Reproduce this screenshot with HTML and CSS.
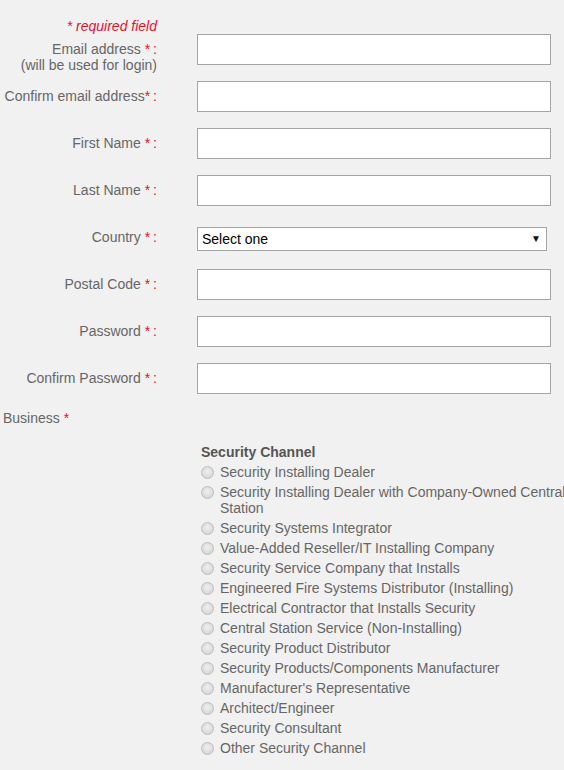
FILE: index.html
```html
<!DOCTYPE html>
<html lang="en">
  <head>
    <meta charset="UTF-8" />
    <meta name="viewport" content="width=device-width, initial-scale=1.0" />
    <title>Register</title>
    <link rel="stylesheet" href="styles.css">
  </head>
  <body>
    <form id="register">
      <p class="required-note">* required field</p>

      <div class="row">
        <label for="email">Email address <span class="req">*</span><span class="colon">:</span><br>(will be used for login)</label>
        <input type="text" id="email" />
      </div>
      <div class="row">
        <label for="email2">Confirm email address<span class="req">*</span><span class="colon">:</span></label>
        <input type="text" id="email2" />
      </div>
      <div class="row">
        <label for="first">First Name <span class="req">*</span><span class="colon">:</span></label>
        <input type="text" id="first" />
      </div>
      <div class="row">
        <label for="last">Last Name <span class="req">*</span><span class="colon">:</span></label>
        <input type="text" id="last" />
      </div>
      <div class="row">
        <label for="country">Country <span class="req">*</span><span class="colon">:</span></label>
        <div class="select-wrap">
          <select id="country">
            <option>Select one</option>
          </select>
        </div>
      </div>
      <div class="row">
        <label for="postal">Postal Code <span class="req">*</span><span class="colon">:</span></label>
        <input type="text" id="postal" />
      </div>
      <div class="row">
        <label for="pass">Password <span class="req">*</span><span class="colon">:</span></label>
        <input type="password" id="pass" />
      </div>
      <div class="row">
        <label for="pass2">Confirm Password <span class="req">*</span><span class="colon">:</span></label>
        <input type="password" id="pass2" />
      </div>

      <div class="business">Business <span class="req">*</span></div>

      <div class="channel">
        <h3>Security Channel</h3>
        <ul>
          <li><input type="radio" name="channel" /><span>Security Installing Dealer</span></li>
          <li><input type="radio" name="channel" /><span>Security Installing Dealer with Company-Owned Central Station</span></li>
          <li><input type="radio" name="channel" /><span>Security Systems Integrator</span></li>
          <li><input type="radio" name="channel" /><span>Value-Added Reseller/IT Installing Company</span></li>
          <li><input type="radio" name="channel" /><span>Security Service Company that Installs</span></li>
          <li><input type="radio" name="channel" /><span>Engineered Fire Systems Distributor (Installing)</span></li>
          <li><input type="radio" name="channel" /><span>Electrical Contractor that Installs Security</span></li>
          <li><input type="radio" name="channel" /><span>Central Station Service (Non-Installing)</span></li>
          <li><input type="radio" name="channel" /><span>Security Product Distributor</span></li>
          <li><input type="radio" name="channel" /><span>Security Products/Components Manufacturer</span></li>
          <li><input type="radio" name="channel" /><span>Manufacturer's Representative</span></li>
          <li><input type="radio" name="channel" /><span>Architect/Engineer</span></li>
          <li><input type="radio" name="channel" /><span>Security Consultant</span></li>
          <li><input type="radio" name="channel" /><span>Other Security Channel</span></li>
        </ul>
      </div>
    </form>
  </body>
</html>
```

FILE: styles.css
```css
body {
  font-family: Arial, "Liberation Sans", sans-serif;
  font-size: 14px;
  line-height: 16px;
  color: #666;
  background-color: #f1f1f1;
  margin: 0;
  padding: 18px 0 0 3px;
}

.required-note {
  width: 154px;
  margin: 0;
  text-align: right;
  font-style: italic;
  color: #e3122d;
}

.req {
  color: #e3122d;
}

.colon {
  color: #e3122d;
  margin-left: 3px;
}

/* every row is one input tall, two-line labels just hang below */
.row {
  display: flex;
  align-items: flex-start;
  gap: 40px;
  height: 31px;
  margin-bottom: 16px;
}

.row label {
  width: 154px;
  flex-shrink: 0;
  padding-top: 7px;
  text-align: right;
}

.row input {
  box-sizing: border-box;
  width: 354px;
  height: 31px;
  margin: 0;
  padding: 4px 6px;
  border: 1px solid #a5a5a5;
  background-color: #fff;
  font: inherit;
}

.select-wrap {
  position: relative;
  margin-top: 5px;
}

.select-wrap select {
  box-sizing: border-box;
  width: 350px;
  height: 24px;
  margin: 0;
  padding: 0 4px;
  border: 1px solid #a5a5a5;
  border-radius: 0;
  background-color: #fff;
  color: #000;
  font: inherit;
  appearance: none;
  -webkit-appearance: none;
}

.select-wrap::after {
  content: "\25BC";
  position: absolute;
  right: 6px;
  top: 6px;
  font-size: 10px;
  line-height: 12px;
  color: #111;
  pointer-events: none;
}

.channel {
  margin: 18px 0 0 198px;
  overflow: hidden;
}

.channel h3 {
  margin: 0 0 4px 0;
  font-size: 14px;
  line-height: 16px;
  color: #555;
}

.channel ul {
  list-style: none;
  margin: 0;
  padding: 0;
}

.channel li {
  display: flex;
  align-items: flex-start;
  margin-bottom: 4px;
}

.channel li span {
  width: 350px;
  flex-shrink: 0;
}

.channel input[type="radio"] {
  appearance: none;
  -webkit-appearance: none;
  box-sizing: border-box;
  width: 13px;
  height: 13px;
  margin: 2px 6px 0 0;
  flex-shrink: 0;
  border: 1px solid #bdbdbd;
  border-radius: 50%;
  background: radial-gradient(circle at 50% 40%, #efefef 0%, #d9d9d9 70%, #cccccc 100%);
}
```
